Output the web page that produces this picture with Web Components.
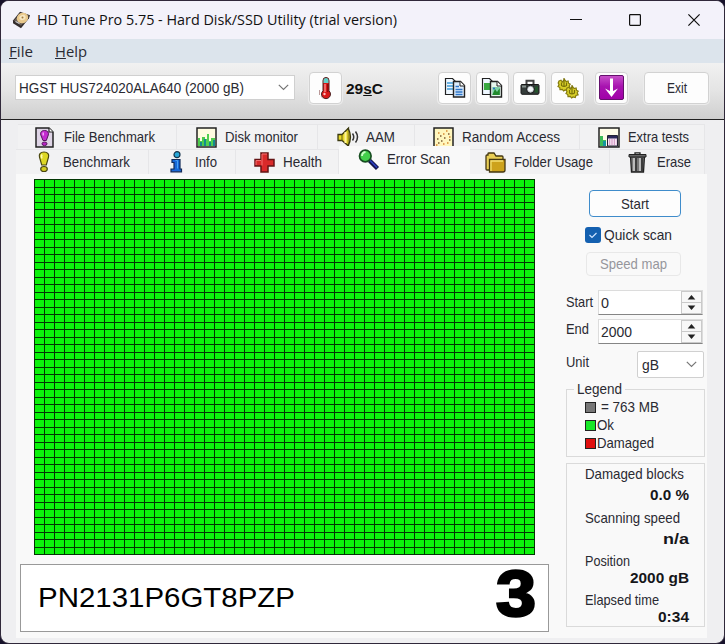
<!DOCTYPE html>
<html lang="en">
<head>
<meta charset="utf-8">
<title>HD Tune Pro</title>
<style>
  html, body { margin: 0; height: 100%; }
  body { background: #17122b; overflow: hidden; font-family: "Liberation Sans", sans-serif; color: #2a2a32; }
</style>
</head>
<body>
<tune-window></tune-window>

<script>
{
  const icons = {
    disk: `<svg width="20" height="18" viewBox="0 0 20 18"><path d="M1 9.500 8 .8l10 3.400-1 3-8 10-8-5z" fill="#332c2c"/><path d="M2 9.500 8.500 2l8.500 2.800-8 10z" fill="#6b6059"/><ellipse cx="10.500" cy="7" rx="5.800" ry="5.200" fill="#e9c98d" transform="rotate(-25 10.500 7)"/><ellipse cx="10.500" cy="6.500" rx="3.200" ry="2.600" fill="#f7e7c3" transform="rotate(-25 10.500 6.500)"/><circle cx="10.500" cy="6.500" r="1" fill="#a17b3d"/><path d="m3.500 10.500 4 2" stroke="#ccc" stroke-width="1.200"/></svg>`,
    thermo: `<svg width="16" height="24" viewBox="0 0 16 24"><path d="M5 4.500a3 3 0 0 1 6 0v10.300a4.500 4.500 0 1 1-6 0z" fill="#d81818" stroke="#4a2020"/><path d="M5.500 4.500a2.500 2.500 0 0 1 5 0V7h-5z" fill="#5fd0c8"/><path d="M7 8v8" stroke="#ff9090" stroke-width="1.300"/><circle cx="6.500" cy="18" r="1.200" fill="#ffc0c0"/><path d="M1.500 14v5M3 20l2 2.500" stroke="#b99"/><path d="M9.800 8v8" stroke="#8a0808" stroke-width="1.300"/></svg>`,
    copy: `<svg width="22" height="20" viewBox="0 0 22 20"><path d="M1.500.5h7l3 3v13h-10z" fill="#eef7ff" stroke="#222" stroke-width="1.200"/><path d="M3 5h6M3 8h6M3 11h6" stroke="#3f9ad8" stroke-width="1.500"/><path d="M9.500 3.500h7l4 4v11.500h-11z" fill="#dcecfc" stroke="#222" stroke-width="1.400"/><path d="M16 3.500v4.500h4.500" fill="#fff" stroke="#222"/><path d="M11.500 8.500h3.500M11.500 11.500h7M11.500 14h7M11.500 16.500h7" stroke="#2c74c8" stroke-width="1.400"/></svg>`,
    copyImage: `<svg width="22" height="20" viewBox="0 0 22 20"><path d="M1.500.5h7l3 3v13h-10z" fill="#eef7ff" stroke="#222" stroke-width="1.200"/><path d="M3 5h6v7H3z" fill="#38a840"/><path d="M9.500 3.500h7l4 4v11.500h-11z" fill="#e7f6ee" stroke="#222" stroke-width="1.400"/><path d="M16 3.500v4.500h4.500" fill="#fff" stroke="#222"/><path d="M11.300 9h7.500v8h-7.500z" fill="#7fcfa8"/><path d="m11.300 17 2.700-6 2 3 2.800-4v7z" fill="#218a2c"/><circle cx="13" cy="10.500" r="1" fill="#246cc8"/></svg>`,
    camera: `<svg width="20" height="18" viewBox="0 0 20 18"><path d="M6.500 5V1.800h7V5" fill="none" stroke="#444" stroke-width="2"/><path d="M1.500 5.500h17l.5 1v8l-1 .8H2l-1-.8v-8z" fill="#353d3b" stroke="#181818"/><path d="M2 6.500h4v2H2z" fill="#88928e"/><path d="M14.500 7.500h3.500v6h-3.500z" fill="#23542c"/><circle cx="10.500" cy="10.300" r="4" fill="#aab2b6" stroke="#111"/><circle cx="10.500" cy="10.300" r="2.500" fill="#f2f6f8"/></svg>`,
    gears: `<svg width="22" height="20" viewBox="0 0 22 20"><g fill="#d8cf28" stroke="#857c10" stroke-width="1.200"><path d="m2 3 2-.8L5.300 4 7.500 1.500l1.600 2 2-.6.4 2.300 1.700 1-1 1.600.9 2.100-2.200.6-.6 2-2.200-.6-1.500 1.100-1.300-1.700-2.300.2-.2-2L1 8.500l1-1.800L1.200 5z"/><path d="m10 10 2-.8 1.300 1.800 2.200-2.500 1.600 2 2-.6.4 2.300 1.700 1-1 1.600.9 2.100-2.200.6-.6 2-2.200-.6-1.500 1.100-1.300-1.700-2.300.2-.2-2-1.800-1 1-1.800-.8-1.700z"/></g><path d="M7 0v9M4.500 4.500v3q2.500 2 5 0v-3M15 7v9.500M12.500 12v3q2.500 2 5 0v-3" fill="none" stroke="#777008" stroke-width="1.200"/></svg>`,
    down: `<svg width="25" height="25" viewBox="0 0 25 25"><defs><linearGradient id="p" x2="0" y2="1"><stop stop-color="#c852ca"/><stop offset=".45" stop-color="#a814b0"/><stop offset="1" stop-color="#a000a8"/></linearGradient></defs><rect x=".5" y=".5" width="24" height="24" rx="1.500" fill="url(#p)" stroke="#64106c"/><path d="M12.500 3.500v15" stroke="#fff" stroke-width="3"/><path d="m6 13.500 5 2.500h3l5-2.500-6.500 8.500z" fill="#fff"/></svg>`,
    fileBench: `<svg width="20" height="21" viewBox="0 0 20 21"><path d="M1 1h13l4 4v15H1z" fill="#ded4e5" stroke="#222" stroke-width="1.500"/><path d="M14 1v4h4" fill="#fff" stroke="#222" stroke-width="1.200"/><path d="M9.500 3.500c3 0 4.500 2 3.800 4.500l-2 5.500H8L5.800 8c-.8-2.500.7-4.500 3.700-4.500z" fill="#c42bd0" stroke="#54145c"/><path d="M8.200 5.500v3" stroke="#f4a8f8" stroke-width="1.500"/><ellipse cx="9.500" cy="16.800" rx="2.500" ry="1.800" fill="#b823c4" stroke="#54145c"/></svg>`,
    monitor: `<svg width="21" height="21" viewBox="0 0 21 21"><path d="M1 1h19v19H1z" fill="#fffce0" stroke="#222" stroke-width="1.500"/><path d="M2 19v-8h2v3h2v-4h3v9z" fill="#4bcb4b"/><path d="M9 19v-7h2V7h2v7h2v-3h4v8z" fill="#50cf50"/><path d="M4 19v-4h2v4M8 19v-7h2v7M13 19v-4h2v4M17 19v-6h2v6" fill="#138b8e"/></svg>`,
    speaker: `<svg width="22" height="21" viewBox="0 0 22 21"><path d="M1 7.500h4L11.500 1v18L5 13.500H1z" fill="#e6d829" stroke="#3b3910" stroke-width="1.300"/><path d="M5 8v6" stroke="#665e10"/><path d="M8.500 5v11" stroke="#fff398" stroke-width="2"/><path d="M11 1q5 9 0 18" fill="#a49624" stroke="#3b3910" stroke-width="1.300"/><path d="M15.500 6.500q2.500 3.500 0 7M18.500 4.500q4 5.500 0 11" fill="none" stroke="#333" stroke-width="1.500"/></svg>`,
    random: `<svg width="21" height="21" viewBox="0 0 21 21"><path d="M1 1h19v19H1z" fill="#fff6bd" stroke="#222" stroke-width="1.500"/><path d="M4 12h1.500M7 9h1.500M11 11h1.500M15 7h1.500M5 16h1.500M16 13h1.500M8 14h1.500" stroke="#7a5a34" stroke-width="1.500"/><path d="M13 4h1.500M10 7h1.500M16 10h1.500M3 18h1.500M10 17h1.500M14 16h1.500M5 6h1.500" stroke="#d88830" stroke-width="1.500"/></svg>`,
    extra: `<svg width="22" height="21" viewBox="0 0 22 21"><path d="M1 1h20v19H1z" fill="#fffce8" stroke="#222" stroke-width="1.500"/><path d="M2 19V9h3v4h3v6z" fill="#3dbb58"/><path d="M5 19v-5h3v5z" fill="#1595a0"/><path d="M9.500 8.500h10V19h-10z" fill="#f6e6f4" stroke="#223"/><path d="M10 9h9v2.500h-9z" fill="#2c2858"/><path d="M11 13h7.500M11 15h7.500M11 17h7.500" stroke="#b8589c" stroke-dasharray="1.200 1.200" stroke-width="1.100"/></svg>`,
    bulb: `<svg width="12" height="22" viewBox="0 0 12 22"><path d="M6 1c4 0 5.200 2.500 4.500 5.200L8.300 14H3.700L1.500 6.200C.8 3.500 2 1 6 1z" fill="#ddd724" stroke="#4a4710" stroke-width="1.200"/><path d="M4 3.500q-1 1.500-.2 4" fill="none" stroke="#fffbb0" stroke-width="1.700"/><ellipse cx="6" cy="18" rx="3.300" ry="2.500" fill="#d4cd20" stroke="#4a4710" stroke-width="1.200"/></svg>`,
    info: `<svg width="13" height="22" viewBox="0 0 13 22"><circle cx="7" cy="3.700" r="3" fill="#29a8d8" stroke="#16344c" stroke-width="1.200"/><path d="M2 8.500h8V18h1.500v2.800H1V18h3v-6.500H2z" fill="#1768d8" stroke="#122a58" stroke-width="1.200"/><path d="M5.500 9.500h2v8" fill="none" stroke="#49a0f4"/></svg>`,
    health: `<svg width="21" height="21" viewBox="0 0 21 21"><path d="M7 1h7v6.500h6v6.500h-6v6H7v-6H1V7.500h6z" fill="#d92a2a" stroke="#641414" stroke-width="1.500"/><path d="M8 13.500V2h5M2 13V8.500h5" fill="none" stroke="#f47070"/></svg>`,
    magnifier: `<svg width="21" height="21" viewBox="0 0 21 21"><path d="m11.500 11.500 8 8" stroke="#12144a" stroke-width="4.400"/><path d="m11.500 11 7.500 7.500" stroke="#2b3fc0" stroke-width="1.700"/><circle cx="7.300" cy="7" r="5.800" fill="#43cf4b" stroke="#174d20" stroke-width="1.700"/><path d="M4 7q0-3.500 3.500-4" fill="none" stroke="#c8ffc4" stroke-width="1.800"/></svg>`,
    folder: `<svg width="21" height="21" viewBox="0 0 21 21"><path d="M1 4q0-1 1-1h1V1.500Q3 1 4 1h5l2 3h6q1 0 1 1v13H2q-1 0-1-1z" fill="#e9ce55" stroke="#443711" stroke-width="1.300"/><path d="M4.500 7.500H20V18q0 2-2 2H4.500z" fill="#cda21c" stroke="#443711" stroke-width="1.300"/><path d="M6 19V9h12" fill="none" stroke="#f5df72" stroke-width="1.300"/></svg>`,
    trash: `<svg width="19" height="21" viewBox="0 0 19 21"><path d="M2.500 4.500h14l-1 15.500h-12z" fill="#777" stroke="#222" stroke-width="1.300"/><path d="M6 6v13M12 6v13" stroke="#ccc" stroke-width="1.600"/><path d="M8 6v13M14 6v13" stroke="#333" stroke-width="1.700"/><path d="M1 2.500h17v2.500H1z" fill="#666" stroke="#222"/><path d="M7 2.500V.8h5v1.700" fill="none" stroke="#222" stroke-width="1.300"/></svg>`,
    chevron: `<svg width="11" height="7" viewBox="0 0 11 7"><path d="m.8.8 4.700 4.700L10.200.8" fill="none" stroke="#777" stroke-width="1.200"/></svg>`,
    check: `<svg width="16" height="16" viewBox="0 0 16 16"><rect width="16" height="16" rx="3" fill="#1460b0"/><path d="m4.500 8 2.500 2.500 4.500-4.500" fill="none" stroke="#cfe4ff" stroke-width="1.200"/></svg>`,
    minimize: `<svg width="12" height="12" viewBox="0 0 12 12"><path d="M0 5.500h12" stroke="#111"/></svg>`,
    maximize: `<svg width="12" height="12" viewBox="0 0 12 12"><rect x=".6" y=".6" width="10.800" height="10.800" rx=".8" fill="none" stroke="#111" stroke-width="1.200"/></svg>`,
    close: `<svg width="12" height="12" viewBox="0 0 12 12"><path d="m.4.4 11.200 11.200M11.600.4.4 11.600" stroke="#111" stroke-width="1.200"/></svg>`
  };

  // every element gets its markup the same way
  class Base extends HTMLElement {
    constructor() {
      super();
      this.attachShadow({ mode: "open" });
    }
    connectedCallback() {
      this.shadowRoot.innerHTML = this.render();
      this.ready && this.ready();
    }
  }

  // <fit-label w="90">: one line of text, condensed or stretched to w pixels
  class FitLabel extends Base {
    render() {
      return `<style>
        :host { display: block; flex: none; height: 16px; line-height: 16px; font-size: 14.5px; white-space: nowrap; }
        span { display: inline-block; transform-origin: 0 50%; }
      </style><span><slot></slot></span>`;
    }
    ready() {
      const span = this.shadowRoot.querySelector("span");
      const w = +this.getAttribute("w");
      this.style.width = w + "px";
      span.style.transform = `scaleX(${w / span.getBoundingClientRect().width})`;
    }
  }
  customElements.define("fit-label", FitLabel);

  class UiIcon extends Base {
    render() {
      return `<style>:host { display: block; flex: none; } svg { display: block; overflow: visible; }</style>${icons[this.getAttribute("name")]}`;
    }
  }
  customElements.define("ui-icon", UiIcon);

  class UiButton extends Base {
    render() {
      return `<style>
        :host { display: flex; flex: none; box-sizing: border-box; align-items: center; justify-content: center;
          width: 33px; height: 32px; border: 1px solid #d2d2d2; border-radius: 4px; background: #fdfdfd;
          box-shadow: 0 0 0 1px #ececec; }
        :host([primary]) { border: 1.5px solid #3f8ccb; box-shadow: none; }
        :host([disabled]) { border-color: #e8e8e8; background: #f9f9f9; color: #96969c; box-shadow: none; }
      </style><slot></slot>`;
    }
  }
  customElements.define("ui-button", UiButton);

  class UiSelect extends Base {
    render() {
      return `<style>
        :host { display: flex; flex: none; box-sizing: border-box; align-items: center; justify-content: space-between;
          border: 1px solid #d0d0d0; background: #fff; }
      </style><slot></slot><ui-icon name="chevron"></ui-icon>`;
    }
  }
  customElements.define("ui-select", UiSelect);

  class UiSpinner extends Base {
    render() {
      return `<style>
        :host { display: flex; flex: none; box-sizing: border-box; width: 105px; height: 25px; justify-content: space-between;
          align-items: center; border: 1px solid #dcdcdc; border-bottom-color: #858585; background: #fff; padding-left: 2px; }
        .arrows { display: flex; flex-direction: column; width: 21px; height: 23px; background: #cacaca; gap: 1px; padding: 1px; box-sizing: border-box; }
        .arrows svg { flex: 1; min-height: 0; width: 100%; background: #f8f8f8; }
      </style>
      <slot></slot>
      <div class="arrows">
        <svg viewBox="0 0 19 10"><path d="m9.500 3 3.800 4.500H5.700z" fill="#222"/></svg>
        <svg viewBox="0 0 19 10"><path d="m9.500 7 3.800-4.500H5.700z" fill="#222"/></svg>
      </div>`;
    }
  }
  customElements.define("ui-spinner", UiSpinner);

  class UiTab extends Base {
    render() {
      return `<style>
        :host { display: flex; flex: none; box-sizing: border-box; align-items: center; height: 25px;
          border: solid #e6e6e8; border-width: 1px 1px 0 0; background: #f2f2f3; }
        :host([active]) { height: 28px; background: #f9f9f9; padding-bottom: 3px; border-color: #f9f9f9; }
        ui-icon { margin-right: var(--gap, 8px); }
      </style><ui-icon name="${this.getAttribute("icon")}"></ui-icon><slot></slot>`;
    }
  }
  customElements.define("ui-tab", UiTab);

  // surface map: 50 x 50 blocks, rows land on rounded half pixels
  class BlockMap extends Base {
    render() {
      let d = "";
      for (let i = 0; i <= 50; i++) {
        d += `M${i * 10 + 0.5} 0v376M0 ${Math.min(Math.round(i * 7.5), 375) + 0.5}h501`;
      }
      return `<style>:host { display: block; width: 501px; height: 376px; } svg { display: block; }</style>
        <svg width="501" height="376"><rect width="501" height="376" fill="#0cf40c"/><path d="${d}" stroke="#033603"/></svg>`;
    }
  }
  customElements.define("block-map", BlockMap);

  class LegendItem extends Base {
    render() {
      return `<style>
        :host { display: flex; align-items: center; height: 18px; gap: 1px; }
        i { box-sizing: border-box; width: 11px; height: 11px; border: 1.5px solid #222; background: ${this.getAttribute("color")}; }
      </style><i></i><slot></slot>`;
    }
  }
  customElements.define("legend-item", LegendItem);

  class SidePanel extends Base {
    render() {
      return `<style>
        :host { display: flex; flex-direction: column; width: 139px; }
        .row { display: flex; align-items: center; justify-content: space-between; width: 137px; }
        .check { display: flex; align-items: center; gap: 3px; margin: 9px 0 9px 19px; height: 17px; }
        ui-select { width: 67px; height: 27px; padding: 0 6px 0 4px; border-radius: 2px; }
        fieldset { margin: 3px 0 0; box-sizing: border-box; width: 139px; height: 76px; border: 1px solid #dadada; padding: 0 0 0 18px; }
        legend { margin-left: -11px; padding: 0 3px; }
        .items { display: flex; flex-direction: column; margin-top: 1px; }
        .stats { box-sizing: border-box; display: flex; flex-direction: column; width: 139px; height: 164px; margin-top: 6px;
          border: 1px solid #dadada; padding: 2px 15px 0 18px; }
        b { display: flex; justify-content: flex-end; color: #16161a; }
      </style>
      <ui-button primary style="width:92px;height:27px;margin-left:23px"><fit-label w="28">Start</fit-label></ui-button>
      <div class="check"><ui-icon name="check"></ui-icon><fit-label w="68">Quick scan</fit-label></div>
      <ui-button disabled style="width:95px;height:24px;margin-left:20px"><fit-label w="67">Speed map</fit-label></ui-button>
      <div class="row" style="margin-top:14px"><fit-label w="27" style="margin-top:-2px">Start</fit-label><ui-spinner><fit-label w="8">0</fit-label></ui-spinner></div>
      <div class="row" style="margin-top:4px"><fit-label w="23" style="margin-top:-5px">End</fit-label><ui-spinner><fit-label w="31">2000</fit-label></ui-spinner></div>
      <div class="row" style="margin-top:7px;width:138px"><fit-label w="23" style="margin-top:-6px">Unit</fit-label><ui-select><fit-label w="17">gB</fit-label></ui-select></div>
      <fieldset>
        <legend><fit-label w="45">Legend</fit-label></legend>
        <div class="items">
          <legend-item color="#777"><fit-label w="58" style="margin-left:4px">= 763 MB</fit-label></legend-item>
          <legend-item color="#18e828"><fit-label w="17">Ok</fit-label></legend-item>
          <legend-item color="#e01010"><fit-label w="57">Damaged</fit-label></legend-item>
        </div>
      </fieldset>
      <div class="stats">
        <fit-label w="99">Damaged blocks</fit-label>
        <b style="margin-top:5px"><fit-label w="39">0.0 %</fit-label></b>
        <fit-label w="95" style="margin-top:7px">Scanning speed</fit-label>
        <b style="margin-top:5px"><fit-label w="26">n/a</fit-label></b>
        <fit-label w="45" style="margin-top:6px">Position</fit-label>
        <b style="margin-top:1px"><fit-label w="59">2000 gB</fit-label></b>
        <fit-label w="74" style="margin-top:6px">Elapsed time</fit-label>
        <b style="margin-top:1px"><fit-label w="31">0:34</fit-label></b>
      </div>`;
    }
  }
  customElements.define("side-panel", SidePanel);

  class TuneWindow extends Base {
    render() {
      return `<style>
        :host { display: flex; flex-direction: column; box-sizing: border-box; width: 725px; height: 644px;
          border: 1px solid #30283a; border-radius: 9px; overflow: hidden; background: #efeff1; }
        .title { display: flex; align-items: center; height: 38px; background: #f3f2fa; padding: 0 24px 0 11px; flex: none; }
        .title fit-label { margin-left: 5px; margin-right: auto; height: 22px; font: 15px/20px "Open Sans", sans-serif; color: #111; }
        .title .ctl { display: flex; gap: 47px; }
        .menu { display: flex; align-items: center; height: 24px; background: #dce4ec; padding-left: 8px; gap: 22px; flex: none; }
        .menu fit-label { font: 15px/18px "Open Sans", sans-serif; height: 18px; }
        .tools { display: flex; align-items: center; height: 57px; box-sizing: border-box; padding: 0 15px 7px 14px; flex: none;
          background: linear-gradient(#f1f1f1, #e4e4e4 50%, #cfcfcf); border-bottom: 1px solid #222; }
        .tools ui-select { width: 280px; height: 25px; padding: 0 5px 0 3px; }
        .temp { font-weight: bold; color: #111; margin: 2px auto 0 4px; }
        .group { display: flex; gap: 4.600px; }
        .tabs { display: flex; flex-direction: column; width: 689px; margin-left: 15px; padding-top: 4px; flex: none; }
        .tabrow { display: flex; align-items: flex-end; height: 25px; }
        .page { display: flex; justify-content: space-between; box-sizing: border-box; width: 691px; height: 464px; margin-left: 15px;
          background: #f9f9f9; padding: 5px 2px 0 4px; }
        .left { display: flex; flex-direction: column; }
        block-map { margin-left: 14px; }
        .serial { display: flex; align-items: center; justify-content: space-between; box-sizing: border-box; width: 529px; height: 68px;
          margin-top: 9px; border: 1.500px solid #999; background: #fff; padding: 0 12px 0 17px; color: #000; }
        .serial fit-label { height: 60px; }
        .serial .sn { font-size: 28.500px; line-height: 59px; }
        .serial .num { font-size: 64px; line-height: 52px; font-weight: bold; -webkit-text-stroke: 2.500px #000; }
      </style>
      <div class="title">
        <ui-icon name="disk"></ui-icon>
        <fit-label w="360">HD Tune Pro 5.75 - Hard Disk/SSD Utility (trial version)</fit-label>
        <div class="ctl"><ui-icon name="minimize"></ui-icon><ui-icon name="maximize"></ui-icon><ui-icon name="close"></ui-icon></div>
      </div>
      <div class="menu"><fit-label w="24"><u>F</u>ile</fit-label><fit-label w="32"><u>H</u>elp</fit-label></div>
      <div class="tools">
        <ui-select><fit-label w="225">HGST HUS724020ALA640 (2000 gB)</fit-label></ui-select>
        <ui-button style="margin-left:14px"><ui-icon name="thermo"></ui-icon></ui-button>
        <fit-label class="temp" w="37">29<u>s</u>C</fit-label>
        <div class="group">
          <ui-button><ui-icon name="copy"></ui-icon></ui-button>
          <ui-button><ui-icon name="copyImage"></ui-icon></ui-button>
          <ui-button><ui-icon name="camera"></ui-icon></ui-button>
          <ui-button><ui-icon name="gears"></ui-icon></ui-button>
        </div>
        <ui-button style="margin-left:11px"><ui-icon name="down"></ui-icon></ui-button>
        <ui-button style="margin-left:16px;width:65px"><fit-label w="20">Exit</fit-label></ui-button>
      </div>
      <div class="tabs">
        <div class="tabrow">
          <ui-tab icon="fileBench" style="width:159px;margin-left:2px;padding-left:17px;--gap:9px"><fit-label w="91">File Benchmark</fit-label></ui-tab>
          <ui-tab icon="monitor" style="width:141px;padding-left:19px;--gap:8px"><fit-label w="73">Disk monitor</fit-label></ui-tab>
          <ui-tab icon="speaker" style="width:97px;padding-left:19px;--gap:7px"><fit-label w="29">AAM</fit-label></ui-tab>
          <ui-tab icon="random" style="width:165px;padding-left:18px;--gap:8px"><fit-label w="98">Random Access</fit-label></ui-tab>
          <ui-tab icon="extra" style="width:125px;padding-left:18px;--gap:8px"><fit-label w="61">Extra tests</fit-label></ui-tab>
        </div>
        <div class="tabrow">
          <ui-tab icon="bulb" style="width:133px;padding-left:22px;--gap:13px"><fit-label w="67">Benchmark</fit-label></ui-tab>
          <ui-tab icon="info" style="width:87px;padding-left:21px;--gap:12px"><fit-label w="22">Info</fit-label></ui-tab>
          <ui-tab icon="health" style="width:103px;padding-left:18px;--gap:8px"><fit-label w="39">Health</fit-label></ui-tab>
          <ui-tab active icon="magnifier" style="width:131px;padding-left:19px;--gap:8px"><fit-label w="63">Error Scan</fit-label></ui-tab>
          <ui-tab icon="folder" style="width:140px;padding-left:15px;--gap:8px"><fit-label w="79">Folder Usage</fit-label></ui-tab>
          <ui-tab icon="trash" style="width:95px;padding-left:18px;--gap:10px"><fit-label w="34">Erase</fit-label></ui-tab>
        </div>
      </div>
      <div class="page">
        <div class="left">
          <block-map></block-map>
          <div class="serial"><fit-label class="sn" w="257">PN2131P6GT8PZP</fit-label><fit-label class="num" w="40">3</fit-label></div>
        </div>
        <side-panel style="margin-top:11px"></side-panel>
      </div>`;
    }
  }
  customElements.define("tune-window", TuneWindow);
}
</script>
</body>
</html>
